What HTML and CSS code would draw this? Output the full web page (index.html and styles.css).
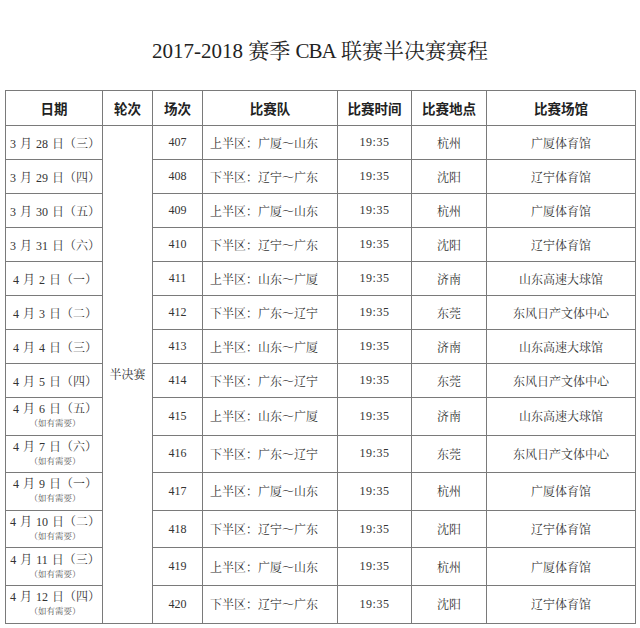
FILE: index.html
```html
<!DOCTYPE html>
<html lang="zh-CN">
<head>
<meta charset="utf-8">
<title>2017-2018 赛季 CBA 联赛半决赛赛程</title>
<link rel="stylesheet" href="styles.css">
</head>
<body>
<div class="page">
  <h1 class="title">2017-2018 赛季 <span class="cba">CBA</span> 联赛半决赛赛程</h1>
  <table class="schedule">
    <colgroup>
      <col class="c-date"><col class="c-round"><col class="c-no"><col class="c-team"><col class="c-time"><col class="c-city"><col class="c-venue">
    </colgroup>
    <thead>
      <tr class="head">
        <th>日期</th><th>轮次</th><th>场次</th><th>比赛队</th><th>比赛时间</th><th>比赛地点</th><th>比赛场馆</th>
      </tr>
    </thead>
    <tbody>
      <tr class="r1"><td class="date">3 月 28 日（三）</td><td class="round" rowspan="14">半决赛</td><td>407</td><td class="team">上半区：广厦～山东</td><td class="time">19:35</td><td>杭州</td><td>广厦体育馆</td></tr>
      <tr class="r1"><td class="date">3 月 29 日（四）</td><td>408</td><td class="team">下半区：辽宁～广东</td><td class="time">19:35</td><td>沈阳</td><td>辽宁体育馆</td></tr>
      <tr class="r1"><td class="date">3 月 30 日（五）</td><td>409</td><td class="team">上半区：广厦～山东</td><td class="time">19:35</td><td>杭州</td><td>广厦体育馆</td></tr>
      <tr class="r1"><td class="date">3 月 31 日（六）</td><td>410</td><td class="team">下半区：辽宁～广东</td><td class="time">19:35</td><td>沈阳</td><td>辽宁体育馆</td></tr>
      <tr class="r1"><td class="date">4 月 2 日（一）</td><td>411</td><td class="team">上半区：山东～广厦</td><td class="time">19:35</td><td>济南</td><td>山东高速大球馆</td></tr>
      <tr class="r1"><td class="date">4 月 3 日（二）</td><td>412</td><td class="team">下半区：广东～辽宁</td><td class="time">19:35</td><td>东莞</td><td>东风日产文体中心</td></tr>
      <tr class="r1"><td class="date">4 月 4 日（三）</td><td>413</td><td class="team">上半区：山东～广厦</td><td class="time">19:35</td><td>济南</td><td>山东高速大球馆</td></tr>
      <tr class="r1"><td class="date">4 月 5 日（四）</td><td>414</td><td class="team">下半区：广东～辽宁</td><td class="time">19:35</td><td>东莞</td><td>东风日产文体中心</td></tr>
      <tr class="r2"><td class="date"><div class="d">4 月 6 日（五）</div><div class="note">（如有需要）</div></td><td>415</td><td class="team">上半区：山东～广厦</td><td class="time">19:35</td><td>济南</td><td>山东高速大球馆</td></tr>
      <tr class="r2"><td class="date"><div class="d">4 月 7 日（六）</div><div class="note">（如有需要）</div></td><td>416</td><td class="team">下半区：广东～辽宁</td><td class="time">19:35</td><td>东莞</td><td>东风日产文体中心</td></tr>
      <tr class="r2"><td class="date"><div class="d">4 月 9 日（一）</div><div class="note">（如有需要）</div></td><td>417</td><td class="team">上半区：广厦～山东</td><td class="time">19:35</td><td>杭州</td><td>广厦体育馆</td></tr>
      <tr class="r2"><td class="date"><div class="d">4 月 10 日（二）</div><div class="note">（如有需要）</div></td><td>418</td><td class="team">下半区：辽宁～广东</td><td class="time">19:35</td><td>沈阳</td><td>辽宁体育馆</td></tr>
      <tr class="r2"><td class="date"><div class="d">4 月 11 日（三）</div><div class="note">（如有需要）</div></td><td>419</td><td class="team">上半区：广厦～山东</td><td class="time">19:35</td><td>杭州</td><td>广厦体育馆</td></tr>
      <tr class="r2"><td class="date"><div class="d">4 月 12 日（四）</div><div class="note">（如有需要）</div></td><td>420</td><td class="team">下半区：辽宁～广东</td><td class="time">19:35</td><td>沈阳</td><td>辽宁体育馆</td></tr>
    </tbody>
  </table>
</div>
</body>
</html>
```

FILE: styles.css
```css
html, body {
  margin: 0;
  padding: 0;
  background: #ffffff;
}

.page {
  width: 640px;
  padding-left: 5px;
  box-sizing: border-box;
  font-family: "Liberation Serif", "Noto Serif CJK SC", "Noto Sans CJK SC", serif;
  color: #333333;
}

.title {
  margin: 0;
  padding-top: 38px;
  height: 52px;
  line-height: 26px;
  font-size: 21px;
  font-weight: normal;
  text-align: center;
  color: #222222;
  padding-right: 5px;
}

.cba {
  letter-spacing: -1px;
}

.schedule {
  width: 630px;
  border-collapse: collapse;
  table-layout: fixed;
}

.c-date { width: 97px; }
.c-round { width: 50px; }
.c-no { width: 50px; }
.c-team { width: 135px; }
.c-time { width: 74px; }
.c-city { width: 75px; }
.c-venue { width: 149px; }

.schedule th,
.schedule td {
  border: 1px solid #7a7a7a;
  padding: 0;
  text-align: center;
  vertical-align: middle;
  white-space: nowrap;
  overflow: hidden;
}

.schedule th {
  font-family: "Noto Sans CJK SC", "Liberation Sans", sans-serif;
  font-weight: bold;
  font-size: 13.5px;
  color: #222222;
}

.schedule td {
  font-size: 12px;
}

.head { height: 35px; }
.r1 { height: 34px; }
.r2 { height: 37.6px; }

.schedule td.date {
  word-spacing: 1px;
  padding-left: 2px;
}

.schedule td.team {
  text-align: left;
  padding-left: 7px;
}

.schedule td.time {
  letter-spacing: 0.5px;
}

.d {
  line-height: 15px;
  margin-top: -1px;
}

.note {
  font-size: 8.5px;
  line-height: 12px;
  color: #555555;
  word-spacing: 0;
}
```
